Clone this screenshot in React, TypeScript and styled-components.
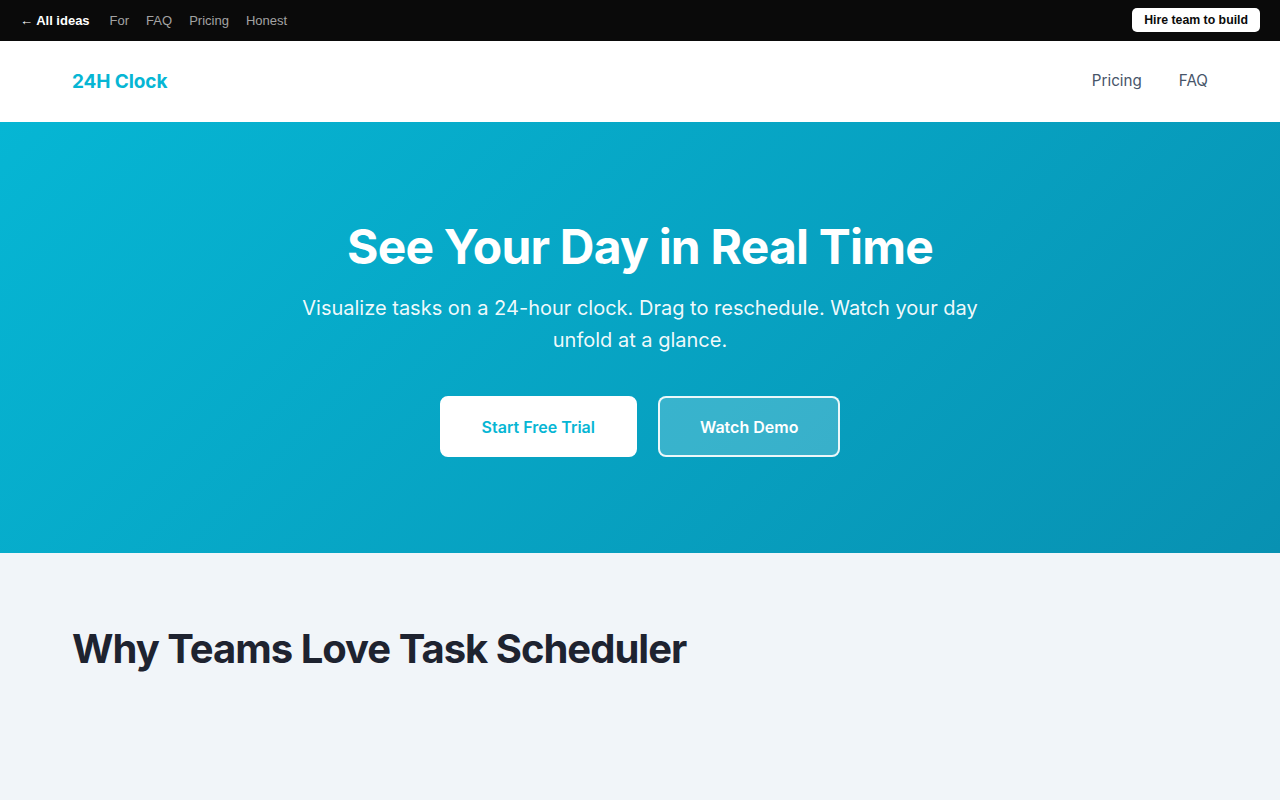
import React from 'react';
import styled, { createGlobalStyle } from 'styled-components';

const GlobalStyle = createGlobalStyle`
  * { box-sizing: border-box; }
  html, body { margin: 0; padding: 0; }
  body {
    font-family: Inter, "Noto Sans", sans-serif;
    background: #f1f5f9;
    -webkit-font-smoothing: antialiased;
  }
  a { text-decoration: none; }
`;

const TopBar = styled.div`
  height: 41px;
  background: #0a0a0a;
  display: flex;
  align-items: center;
  justify-content: space-between;
  padding: 0 20px 1px;
  font-family: "Liberation Sans", Arial, sans-serif;
  font-size: 13px;
`;

const TopLinks = styled.nav`
  display: flex;
  align-items: center;
  gap: 17px;
`;

const TopLink = styled.a<{ $strong?: boolean }>`
  color: ${(p) => (p.$strong ? '#ffffff' : '#a3a3a3')};
  font-weight: ${(p) => (p.$strong ? 700 : 400)};
  margin-right: ${(p) => (p.$strong ? '3px' : '0')};
`;

const HireButton = styled.a`
  background: #ffffff;
  color: #0a0a0a;
  font-weight: 700;
  font-size: 12.3px;
  height: 24px;
  padding: 0 12px;
  border-radius: 5px;
  display: flex;
  align-items: center;
`;

const Header = styled.header`
  background: #ffffff;
  height: 81px;
`;

const Container = styled.div`
  max-width: 1200px;
  margin: 0 auto;
  padding: 0 32px;
`;

const HeaderInner = styled(Container)`
  height: 100%;
  display: flex;
  align-items: center;
  justify-content: space-between;
`;

const Logo = styled.a`
  font-family: Inter, sans-serif;
  font-weight: 700;
  font-size: 19px;
  color: #06b6d4;
  letter-spacing: -0.1px;
`;

const NavLinks = styled.nav`
  display: flex;
  gap: 37px;
  margin-bottom: 3px;
`;

const NavLink = styled.a`
  color: #475569;
  font-size: 15.2px;
`;

const Hero = styled.section`
  background: linear-gradient(135deg, #06b6d4 0%, #0891b2 100%);
  padding: 96px 32px;
  text-align: center;
  color: #ffffff;
`;

const HeroTitle = styled.h1`
  margin: 0;
  font-size: 48px;
  line-height: 58px;
  font-weight: 700;
  letter-spacing: -0.8px;
`;

const HeroText = styled.p`
  margin: 16px auto 0;
  max-width: 700px;
  font-size: 20px;
  line-height: 32px;
  color: rgba(255, 255, 255, 0.95);
`;

const Actions = styled.div`
  margin-top: 40px;
  display: flex;
  justify-content: center;
  gap: 21px;
`;

const HeroButton = styled.a<{ $primary?: boolean }>`
  display: inline-flex;
  align-items: center;
  justify-content: center;
  height: 61px;
  padding: 0 40px;
  border-radius: 8px;
  font-size: 16px;
  font-weight: 600;
  background: ${(p) => (p.$primary ? '#ffffff' : 'rgba(255, 255, 255, 0.2)')};
  color: ${(p) => (p.$primary ? '#06b6d4' : '#ffffff')};
  border: 2px solid ${(p) => (p.$primary ? '#ffffff' : 'rgba(255, 255, 255, 0.9)')};
`;

const Features = styled.section`
  background: #f1f5f9;
  padding: 72px 0 128px;
`;

const SectionTitle = styled.h2`
  margin: 0;
  font-size: 40px;
  line-height: 48px;
  font-weight: 700;
  color: #1e2330;
  letter-spacing: -1px;
`;

export default function App() {
  return (
    <>
      <GlobalStyle />
      <TopBar>
        <TopLinks>
          <TopLink $strong href="#">← All ideas</TopLink>
          <TopLink href="#">For</TopLink>
          <TopLink href="#">FAQ</TopLink>
          <TopLink href="#">Pricing</TopLink>
          <TopLink href="#">Honest</TopLink>
        </TopLinks>
        <HireButton href="#">Hire team to build</HireButton>
      </TopBar>
      <Header>
        <HeaderInner>
          <Logo href="#">24H Clock</Logo>
          <NavLinks>
            <NavLink href="#">Pricing</NavLink>
            <NavLink href="#">FAQ</NavLink>
          </NavLinks>
        </HeaderInner>
      </Header>
      <Hero>
        <HeroTitle>See Your Day in Real Time</HeroTitle>
        <HeroText>
          Visualize tasks on a 24-hour clock. Drag to reschedule. Watch your day unfold at a glance.
        </HeroText>
        <Actions>
          <HeroButton $primary href="#">Start Free Trial</HeroButton>
          <HeroButton href="#">Watch Demo</HeroButton>
        </Actions>
      </Hero>
      <Features>
        <Container>
          <SectionTitle>Why Teams Love Task Scheduler</SectionTitle>
        </Container>
      </Features>
    </>
  );
}
